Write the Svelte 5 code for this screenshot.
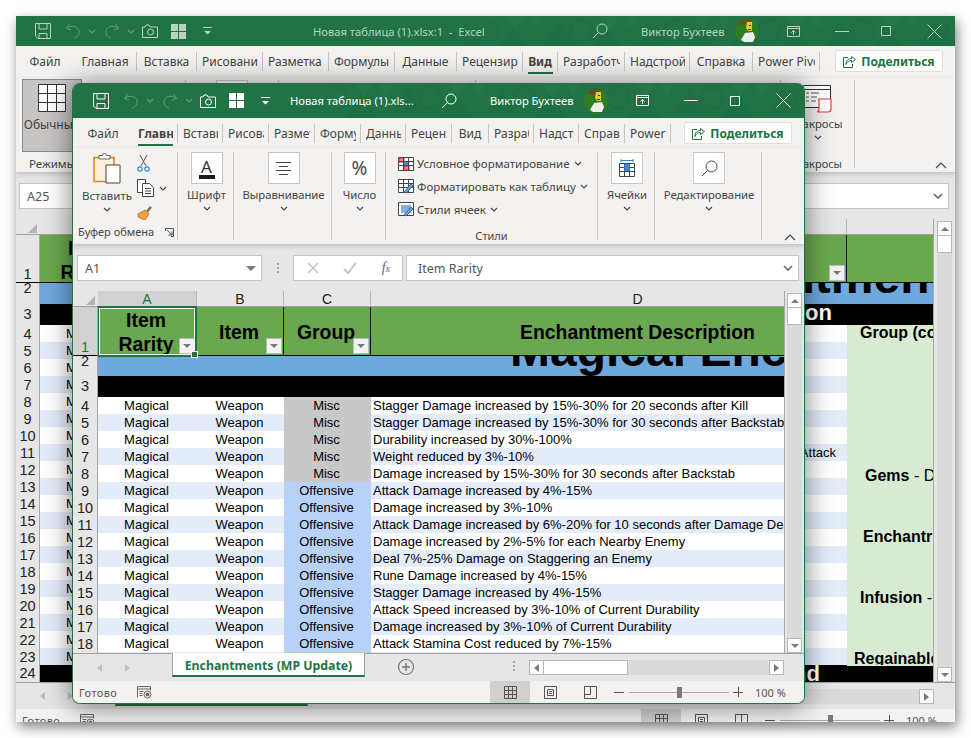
<script>
  const frontTabs = [
    { t: 'Файл', w: 60, c: true },
    { t: 'Главная', w: 45, active: true },
    { t: 'Вставка', w: 45 },
    { t: 'Рисование', w: 46 },
    { t: 'Разметка страницы', w: 46 },
    { t: 'Формулы', w: 46 },
    { t: 'Данные', w: 45 },
    { t: 'Рецензирование', w: 46 },
    { t: 'Вид', w: 37, c: true },
    { t: 'Разработчик', w: 45 },
    { t: 'Надстройки', w: 45 },
    { t: 'Справка', w: 46 },
    { t: 'Power Pivot', w: 46 }
  ];
  const backTabs = [
    { t: 'Файл', w: 58, c: true },
    { t: 'Главная', w: 63, c: true },
    { t: 'Вставка', w: 60, c: true },
    { t: 'Рисование', w: 66 },
    { t: 'Разметка страницы', w: 66 },
    { t: 'Формулы', w: 66, c: true },
    { t: 'Данные', w: 62, c: true },
    { t: 'Рецензирование', w: 66 },
    { t: 'Вид', w: 35, c: true, active: true },
    { t: 'Разработчик', w: 67 },
    { t: 'Надстройки', w: 65 },
    { t: 'Справка', w: 63, c: true },
    { t: 'Power Pivot', w: 67 }
  ];

  const data = [
    ['Misc', 'Stagger Damage increased by 15%-30% for 20 seconds after Kill'],
    ['Misc', 'Stagger Damage increased by 15%-30% for 30 seconds after Backstab'],
    ['Misc', 'Durability increased by 30%-100%'],
    ['Misc', 'Weight reduced by 3%-10%'],
    ['Misc', 'Damage increased by 15%-30% for 30 seconds after Backstab'],
    ['Offensive', 'Attack Damage increased by 4%-15%'],
    ['Offensive', 'Damage increased by 3%-10%'],
    ['Offensive', 'Attack Damage increased by 6%-20% for 10 seconds after Damage Dealt by Heavy Attack'],
    ['Offensive', 'Damage increased by 2%-5% for each Nearby Enemy'],
    ['Offensive', 'Deal 7%-25% Damage on Staggering an Enemy'],
    ['Offensive', 'Rune Damage increased by 4%-15%'],
    ['Offensive', 'Stagger Damage increased by 4%-15%'],
    ['Offensive', 'Attack Speed increased by 3%-10% of Current Durability'],
    ['Offensive', 'Damage increased by 3%-10% of Current Durability'],
    ['Offensive', 'Attack Stamina Cost reduced by 7%-15%'],
    ['', ''], ['', ''], ['', ''], ['', ''], ['', '']
  ];
  const rows = data.map((r, i) => ({ n: i + 4, group: r[0], desc: r[1], alt: i % 2 === 1 }));

  const notes = [
    { b: 'Group (co', rest: '', x: 14, gap: 0 },
    { b: 'Gems', rest: ' - D', x: 19, gap: 127 },
    { b: 'Enchantr', rest: '', x: 17, gap: 45 },
    { b: 'Infusion', rest: ' - ', x: 14, gap: 45 },
    { b: 'Regainable', rest: '', x: 8, gap: 45 }
  ];
</script>

{#snippet chevron()}
  <svg class="chev" viewBox="0 0 8 5" width="8" height="5"><path d="M1 1l3 3 3-3" fill="none" stroke="currentColor" stroke-width="1.1"/></svg>
{/snippet}

{#snippet titlebar(title, id)}
  <div class="titlebar">
    <svg class="pattern" width="520" height="35">
      <defs>
        <pattern {id} width="94" height="35" patternUnits="userSpaceOnUse">
          <path d="M14 30L30 4L46 30ZM62 35L78 8L94 35Z" fill="#1f6f44"/>
          <circle cx="52" cy="15" r="11" fill="none" stroke="#1f6f44" stroke-width="3"/>
          <path d="M0 0H14L7 12ZM70 0H90L80 14Z" fill="#257749"/>
        </pattern>
      </defs>
      <rect width="520" height="35" fill="url(#{id})"/>
    </svg>
    <div class="qat">
      <span class="slot s30"><svg width="16" height="16" viewBox="0 0 16 16" fill="none" stroke="currentColor"><path d="M.5.5h15v15H3L.5 13zM4 .5V6h8V.5M4 15.5v-5h8v5"/></svg></span>
      <span class="slot s23 dim"><svg width="16" height="16" viewBox="0 0 16 16" fill="none" stroke="currentColor"><path d="M4.5 1l-3 4.500 4.500 1.500M1.500 5.500C5 2.500 10 2.500 13 5.500c2.500 3.500.5 8-4 10"/></svg></span>
      <span class="slot s16 dim">{@render chevron()}</span>
      <span class="slot s23 dim"><svg width="16" height="16" viewBox="0 0 16 16" fill="none" stroke="currentColor"><path d="M11.500 1l3 4.500L10 7M14.500 5.500C11 2.500 6 2.500 3 5.500c-2.500 3.500-.5 8 4 10"/></svg></span>
      <span class="slot s15 dim">{@render chevron()}</span>
      <span class="slot s29"><svg width="16" height="14" viewBox="0 0 16 14" fill="none" stroke="currentColor"><path d="M.5 3H3l1-2h3l1 2h7.500v10.500H.5z"/><circle cx="8.500" cy="8" r="3"/></svg></span>
      <span class="slot s32"><svg width="15" height="15" viewBox="0 0 15 15" fill="currentColor"><path d="M0 0h7v7H0zM8 0h7v7H8zM0 8h7v7H0zM8 8h7v7H8z"/></svg></span>
      <span class="slot qd"><svg width="9" height="8" viewBox="0 0 9 8" fill="currentColor"><path d="M0 0h9v1H0zM1 4h7L4.500 7.500z"/></svg></span>
    </div>
    <div class="title">{title}</div>
    <div class="tright">
      <span class="slot s49"><svg width="16" height="16" viewBox="0 0 16 16" fill="none" stroke="currentColor"><circle cx="10" cy="6" r="5"/><path d="M6.500 9.500L1 15"/></svg></span>
      <span class="user">Виктор Бухтеев</span>
      <span class="slot s52">
        <svg class="avatar" width="24" height="24" viewBox="0 0 24 24">
          <circle cx="12" cy="12" r="12" fill="#2f7d23"/>
          <path d="M3 5A12 12 0 0 1 17 1L14 3 8 6z" fill="#6b4a24"/>
          <path d="M12 3h5v9h-4l-2-3z" fill="#e8c53a"/>
          <path d="M10 14l8-1 2 5-2 5H9l-3-2z" fill="#eee"/>
          <path d="M14 6h2v1h-2zM13 10h3v1h-3z" fill="#333"/>
        </svg>
      </span>
      <span class="slot s48"><svg width="13" height="11" viewBox="0 0 13 11" fill="none" stroke="currentColor"><path d="M.5.500h12v10H.5zM.5 2.500h12M6.500 9V4.500M4.500 6.500l2-2 2 2"/></svg></span>
      <span class="slot s46"><svg width="14" height="1" viewBox="0 0 14 1"><path d="M0 .5h14" stroke="currentColor"/></svg></span>
      <span class="slot s46"><svg width="10" height="10" viewBox="0 0 10 10" fill="none" stroke="currentColor"><path d="M.5.500h9v9h-9z"/></svg></span>
      <span class="slot s28"><svg width="15" height="15" viewBox="0 0 15 15" fill="none" stroke="currentColor"><path d="M.5.500l14 14M14.500.5l-14 14"/></svg></span>
    </div>
  </div>
{/snippet}

{#snippet tabstrip(list)}
  <div class="tabs">
    {#each list as tab}
      <div class="tab" class:center={tab.c} class:active={tab.active} class:nosep={tab.t === 'Файл'} style="width:{tab.w}px">
        <span>{tab.t}</span>
      </div>
    {/each}
    <div class="share">
      <svg width="13" height="13" viewBox="0 0 13 13" fill="none" stroke="#217346"><path d="M8.500 1.500l4 3-4 3v-2c-3 0-4.500 1.500-5.500 4 0-4 2-6 5.500-6zM5 2.500H.5v10h9V9"/></svg>
      Поделиться
    </div>
  </div>
{/snippet}

{#snippet formula(ref, value)}
  <div class="formula">
    <div class="namebox"><span>{ref}</span><i class="tri"></i></div>
    <div class="dots"><b></b><b></b><b></b></div>
    <div class="fxbtns">
      <svg width="12" height="12" viewBox="0 0 12 12" fill="none" stroke="#c4c4c4" stroke-width="1.500"><path d="M1 1l10 10M11 1L1 11"/></svg>
      <svg width="14" height="12" viewBox="0 0 14 12" fill="none" stroke="#c4c4c4" stroke-width="2"><path d="M1 7l4 4 8-10"/></svg>
      <span class="fx">f<sub>x</sub></span>
    </div>
    <div class="input"><span>{value}</span><svg class="inchev" width="10" height="6" viewBox="0 0 10 6" fill="none" stroke="#666" stroke-width="1.600"><path d="M1 1l4 4 4-4"/></svg></div>
  </div>
{/snippet}

{#snippet filter()}
  <span class="filter"><i class="tri small"></i></span>
{/snippet}

{#snippet sheet(front)}
  <div class="sheet">
    <div class="colheads">
      <div class="corner"><i></i></div>
      <div class="ch" class:on={front}>A</div>
      <div class="ch">B</div>
      <div class="ch">C</div>
      <div class="ch">D</div>
      <div class="ch"></div>
    </div>
    <div class="line head">
      <div class="rn bottom" class:on={front}>1</div>
      <div class="hc nudge"><span>Item<br />Rarity</span>{@render filter()}
        {#if front}<span class="sel"><i></i></span>{/if}
      </div>
      <div class="hc nudge"><span>Item</span>{@render filter()}</div>
      <div class="hc nudge"><span>Group</span>{@render filter()}</div>
      <div class="hc"><span>Enchantment Description</span>{@render filter()}</div>
      <div class="hc"></div>
    </div>
    <div class="line banner">
      <div class="rn up">2</div>
      <div class="bigtext">Magical Enchantment Information</div>
    </div>
    <div class="line blackrow">
      <div class="rn">3</div>
      <div class="blacktext">{front ? '' : 'Description'}</div>
    </div>
    <div class="rowsblock">
      {#each rows as r}
        <div class="line item" class:alt={r.alt}>
          <div class="rn">{r.n}</div>
          <div class="c mid">Magical</div>
          <div class="c mid">{r.group ? 'Weapon' : ''}</div>
          <div class="c mid" class:misc={r.group === 'Misc'} class:off={r.group === 'Offensive'} class:gr={!r.group}>{r.group}</div>
          <div class="c">{r.desc}</div>
          <div class="c e"></div>
        </div>
      {/each}
      <div class="notes">
        {#each notes as n}
          <div class="note" style="margin-top:{n.gap}px;padding-left:{n.x}px"><b>{n.b}</b>{n.rest}</div>
        {/each}
      </div>
    </div>
    <div class="line blackrow last">
      <div class="rn">24</div>
      <div class="blacktext endtext">Legend</div>
    </div>
  </div>
{/snippet}

{#snippet vscroll()}
  <div class="vscroll">
    <div class="vtrack">
      <span class="sbtn"><i class="tri up"></i></span>
      <span class="vthumb"></span>
      <span class="fill"></span>
      <span class="sbtn"><i class="tri small"></i></span>
    </div>
  </div>
{/snippet}

{#snippet bottombar()}
  <div class="tabbar">
    <span class="nav"><i class="tl"></i><i class="tr dimtr"></i></span>
    <div class="sheettab">Enchantments (MP Update)</div>
    <svg class="plus" width="18" height="18" viewBox="0 0 18 18" fill="none" stroke="#7a7a7a"><circle cx="9" cy="9" r="7.500" stroke-width="1.200"/><path d="M9 5v8M5 9h8" stroke-width="1.500"/></svg>
    <div class="dots tabdots"><b></b><b></b><b></b></div>
    <div class="hscroll">
      <span class="sbtn"><i class="tl dark"></i></span>
      <span class="hthumb"></span>
      <span class="fill"></span>
      <span class="sbtn"><i class="tr"></i></span>
    </div>
  </div>
  <div class="status">
    <span class="ready">Готово</span>
    <svg class="macro" width="15" height="13" viewBox="0 0 15 13" fill="none" stroke="#666"><path d="M.5 11.500V.5h13v4M.5 3h13M2.500 5.500h4M2.500 7.500h3M2.500 9.500h3"/><circle cx="10.500" cy="8.500" r="3.500"/><circle cx="10.500" cy="8.500" r="1.500" fill="#666"/></svg>
    <div class="views">
      <span class="vbtn on"><svg width="13" height="13" viewBox="0 0 13 13" fill="none" stroke="#555"><path d="M.5.500h12v12H.5zM4.500.5v12M8.500.5v12M.5 4.500h12M.5 8.500h12"/></svg></span>
      <span class="vbtn"><svg width="13" height="13" viewBox="0 0 13 13" fill="none" stroke="#555"><path d="M.5.500h12v12H.5zM3.500 3.500h6v6h-6zM5 5.500h3M5 7.500h3"/></svg></span>
      <span class="vbtn"><svg width="13" height="13" viewBox="0 0 13 13" fill="none" stroke="#555"><path d="M.5.500h12v12H.5zM.5 8.500h6V.5"/></svg></span>
    </div>
    <div class="zoombar">
      <span class="zm"></span>
      <span class="slider"><i></i></span>
      <span class="zp"></span>
      <span class="pct">100 %</span>
    </div>
  </div>
{/snippet}

{#snippet collapse()}
  <svg class="collapse" width="12" height="7" viewBox="0 0 12 7" fill="none" stroke="#444" stroke-width="1.100"><path d="M1 6l5-5 5 5"/></svg>
{/snippet}

<div class="desktop">
  <div class="win back">
    {@render titlebar('Новая таблица (1).xlsx:1  -  Excel', 'hexback')}
    {@render tabstrip(backTabs)}
    <div class="ribbon">
      <div class="grp viewgrp">
        <div class="normal">
          <svg width="28" height="28" viewBox="0 0 28 28" fill="#fff" stroke="#333"><path d="M.5.500h27v27H.5zM9.500.5v27M18.500.5v27M.5 9.500h27M.5 18.500h27"/></svg>
          <span>Обычный</span>
        </div>
        <div class="viewlabel">Режимы просмотра</div>
      </div>
      <div class="grp w93"><div class="box"></div></div>
      <div class="grp w197"></div>
      <div class="grp w305"></div>
      <div class="grp macros">
        <svg width="30" height="28" viewBox="0 0 30 28" fill="none">
          <path d="M.5.500h27v22H.5zM.5 4.500h27" stroke="#333" fill="#fff"/>
          <path d="M3 8h3M8 8h8M3 12h3M8 12h6M3 16h3M8 16h5" stroke="#555"/>
          <path d="M15 14h13v10c0 2-1 3-3 3H14c2 0 2-2 2-3V15c0-1-1-1-1-1z" stroke="#e8403a" fill="#fff" stroke-width="1.200"/>
        </svg>
        <div class="blabel">Макросы</div>
        {@render chevron()}
        <div class="glabel">Макросы</div>
      </div>
      {@render collapse()}
    </div>
    {@render formula('A25', '')}
    <div class="area">
      {@render sheet(false)}
      {@render vscroll()}
    </div>
    {@render bottombar()}
  </div>

  <div class="win front">
    {@render titlebar('Новая таблица (1).xls...', 'hexfront')}
    {@render tabstrip(frontTabs)}
    <div class="ribbon">
      <div class="grp clip">
        <div class="cliptop">
          <div class="paste">
            <svg width="28" height="32" viewBox="0 0 28 32" fill="none">
              <path d="M1 5.500h20v24H1z" fill="#fbeedd" stroke="#d98324" stroke-width="1.500"/>
              <path d="M6 6V3.500h3.500a2 2 0 0 1 4 0H17V7H6z" fill="#fff" stroke="#666"/>
              <path d="M13 13h14v18H13z" fill="#fff" stroke="#444"/>
            </svg>
            <span>Вставить</span>
            {@render chevron()}
          </div>
          <div class="tools">
            <svg width="13" height="17" viewBox="0 0 13 17" fill="none"><path d="M3 0l6 11M10 0L4 11" stroke="#555"/><circle cx="3" cy="14" r="2.200" stroke="#2b88d8" stroke-width="1.200"/><circle cx="10" cy="14" r="2.200" stroke="#2b88d8" stroke-width="1.200"/></svg>
            <span class="toolrow">
              <svg width="17" height="18" viewBox="0 0 17 18" fill="#fff" stroke="#444"><path d="M.5.500h8v13h-8z"/><path d="M5.500 4.500h7l4 4v9h-11z"/><path d="M8 9.500h6M8 12h6M8 14.500h6"/></svg>
              {@render chevron()}
            </span>
            <svg width="16" height="16" viewBox="0 0 16 16"><path d="M9 7l4-5 2 1.500-4 5z" fill="#777"/><path d="M1 10l7-4 4 4-4 6-7-3z" fill="#f0a04a" stroke="#d9761a"/></svg>
          </div>
        </div>
        <div class="cliplabel">Буфер обмена
          <svg width="9" height="9" viewBox="0 0 9 9" fill="none" stroke="#555"><path d="M.5 3V.5h8v8H6M2 2l5 5M3.500 7H7V3.500"/></svg>
        </div>
      </div>
      <div class="grp big w56">
        <div class="box"><span class="aglyph">A</span><i class="abar"></i></div>
        <div class="blabel">Шрифт</div>
        {@render chevron()}
      </div>
      <div class="grp big w98">
        <div class="box"><svg width="15" height="13" viewBox="0 0 15 13" stroke="#444"><path d="M0 .5h15M3 4.500h9M0 8.500h15M3 12.500h9"/></svg></div>
        <div class="blabel">Выравнивание</div>
        {@render chevron()}
      </div>
      <div class="grp big w54">
        <div class="box"><span class="pglyph">%</span></div>
        <div class="blabel">Число</div>
        {@render chevron()}
      </div>
      <div class="grp styles">
        <div class="srow">
          <svg width="16" height="14" viewBox="0 0 16 14" fill="#fff" stroke="#444"><path d="M.5.500h15v13H.5z"/><path d="M1 1h5v4H1zM6 9h5v4H6z" fill="#f28a8a" stroke="#e23"/><path d="M6 5h5v4H6z" fill="#3a8fdc" stroke="none"/><path d="M.5 4.500h15M.5 8.500h15M5.500.5v13M10.500.5v13" fill="none"/></svg>
          <span>Условное форматирование</span>{@render chevron()}
        </div>
        <div class="srow">
          <svg width="16" height="15" viewBox="0 0 16 15" fill="#fff" stroke="#444"><path d="M.5.500h15v13H.5z"/><path d="M.5 4.500h15M.5 8.500h15M5.500.5v13M10.500.5v13" fill="none"/><path d="M6 13l7-8 2 2-7 7z" fill="#6fa8dc" stroke="#35618f"/></svg>
          <span>Форматировать как таблицу</span>{@render chevron()}
        </div>
        <div class="srow">
          <svg width="16" height="15" viewBox="0 0 16 15" fill="#fff" stroke="#444"><path d="M.5.500h15v13H.5z"/><path d="M3 3h10v8H3z" fill="#7fb2e5" stroke="none"/><path d="M6 13l7-8 2 2-7 7z" fill="#6fa8dc" stroke="#35618f"/></svg>
          <span>Стили ячеек</span>{@render chevron()}
        </div>
        <div class="glabel">Стили</div>
      </div>
      <div class="grp big w57">
        <div class="box"><svg width="16" height="18" viewBox="0 0 16 18" fill="none"><path d="M.5 4.500h15v13H.5zM5.500 4.500v13M10.500 4.500v13M.5 8.500h15M.5 12.500h15" stroke="#444"/><path d="M5.500 5h5v7h-5z" fill="#3a8fdc"/><path d="M2 1.500h12M2 0v3M14 0v3" stroke="#2b88d8"/></svg></div>
        <div class="blabel">Ячейки</div>
        {@render chevron()}
      </div>
      <div class="grp big w107">
        <div class="box"><svg width="17" height="17" viewBox="0 0 17 17" fill="none" stroke="#444"><circle cx="10.500" cy="6.500" r="5.500"/><path d="M6.500 10.500L1 16"/></svg></div>
        <div class="blabel">Редактирование</div>
        {@render chevron()}
      </div>
      {@render collapse()}
    </div>
    {@render formula('A1', 'Item Rarity')}
    <div class="area">
      {@render sheet(true)}
      {@render vscroll()}
    </div>
    {@render bottombar()}
  </div>
</div>

<style>
  :global(body) {
    margin: 0;
    background: #fff;
  }

  .desktop {
    position: relative;
    width: 971px;
    height: 738px;
    overflow: hidden;
    background: #fff;
    font-family: "Noto Sans", sans-serif;
  }

  i {
    display: block;
    font-style: normal;
  }

  /* windows */
  .win {
    position: absolute;
    display: flex;
    flex-direction: column;
    overflow: hidden;
    box-sizing: border-box;
    background: #f3f2f1;
  }
  .back {
    z-index: 1;
    left: 16px;
    top: 16px;
    width: 939px;
    height: 706px;
    box-shadow: 2px 5px 12px rgba(0, 0, 0, 0.5);
    --tb: 30px;
    --tabs: 32px;
    --rib: 94px;
    --ribtop: 2px;
    --r1: 48px;
    --r2: 21px;
    --rh: 24px;
    --tabbar: 27px;
    --vw: 22px;
    --vpad: 3px;
    --hend: 21px;
    --fg: #b4d3c1;
    --tdim: 0.42;
  }
  .front {
    z-index: 2;
    left: 72px;
    top: 83px;
    width: 733px;
    height: 621px;
    border: 1px solid #217346;
    border-top: 0;
    border-radius: 8px;
    box-shadow: 0 2px 28px rgba(0, 0, 0, 0.5);
    --tb: 35px;
    --tabs: 30px;
    --rib: 96px;
    --ribtop: 4px;
    --r1: 49px;
    --r2: 20px;
    --rh: 25px;
    --tabbar: 28px;
    --vw: 20px;
    --vpad: 2px;
    --hend: 20px;
    --fg: #fff;
    --tdim: 0.3;
  }

  /* title bar */
  .titlebar {
    position: relative;
    flex: none;
    height: var(--tb);
    overflow: hidden;
    background: #217346;
    color: var(--fg);
    display: flex;
    align-items: center;
    font-size: 11.2px;
  }
  .pattern {
    position: absolute;
    right: 0;
    top: 0;
    -webkit-mask-image: linear-gradient(90deg, transparent, #000 60px);
    mask-image: linear-gradient(90deg, transparent, #000 60px);
  }
  .qat {
    position: relative;
    display: flex;
    align-items: center;
    flex: none;
    padding-left: 19px;
  }
  .front .qat {
    padding-left: 20px;
  }
  .slot {
    display: flex;
    align-items: center;
    flex: none;
    height: 18px;
  }
  .s15 { width: 15px; }
  .s16 { width: 16px; }
  .s23 { width: 23px; }
  .s28 { width: 28px; }
  .s29 { width: 29px; }
  .s30 { width: 30px; }
  .s32 { width: 32px; }
  .s46 { width: 46px; }
  .s48 { width: 48px; }
  .s49 { width: 49px; }
  .s52 { width: 52px; }
  .qd { width: 9px; }
  .dim {
    opacity: var(--tdim);
  }
  .title {
    position: relative;
    flex: 1;
    white-space: pre;
    padding-left: 20px;
  }
  .back .title {
    padding-left: 101px;
  }
  .tright {
    position: relative;
    display: flex;
    align-items: center;
    flex: none;
  }
  .user {
    width: 94px;
    white-space: nowrap;
  }
  .avatar {
    display: block;
  }

  /* tabs */
  .tabs {
    flex: none;
    position: relative;
    display: flex;
    height: var(--tabs);
    padding-top: 6px;
    box-sizing: border-box;
    font-size: 12px;
    color: #444;
  }
  .tab {
    position: relative;
    flex: none;
    height: 19px;
    line-height: 19px;
    padding: 0 4px 0 5px;
    box-sizing: border-box;
    border-right: 1px solid #c8c6c4;
  }
  .tab.nosep {
    border-right: 0;
  }
  .tab span {
    display: block;
    overflow: hidden;
    white-space: nowrap;
  }
  .tab.center {
    text-align: center;
    padding: 0;
  }
  .tab.active {
    font-weight: 700;
  }
  .tab.active::after {
    content: '';
    position: absolute;
    left: 5px;
    right: 4px;
    bottom: -3px;
    height: 2px;
    background: #217346;
  }
  .share {
    display: flex;
    align-items: center;
    justify-content: center;
    gap: 5px;
    margin-left: auto;
    margin-right: 12px;
    margin-top: -2px;
    width: 108px;
    height: 22px;
    box-sizing: border-box;
    background: #fff;
    border: 1px solid #e1dfdd;
    border-radius: 2px;
    color: #217346;
    font-weight: 700;
    font-size: 12px;
  }

  /* ribbon */
  .ribbon {
    position: relative;
    z-index: 2;
    flex: none;
    display: flex;
    height: var(--rib);
    padding-top: var(--ribtop);
    box-sizing: border-box;
    font-size: 11.5px;
    color: #444;
    box-shadow: 0 2px 5px rgba(0, 0, 0, 0.18);
  }
  .grp {
    position: relative;
    flex: none;
    height: 88px;
    box-sizing: border-box;
    border-right: 1px solid #c8c6c4;
    display: flex;
    flex-direction: column;
    align-items: center;
  }
  .big {
    padding-left: 2px;
  }
  .box {
    width: 32px;
    height: 32px;
    flex: none;
    box-sizing: border-box;
    background: #fff;
    border: 1px solid #c8c6c4;
    display: flex;
    flex-direction: column;
    align-items: center;
    justify-content: center;
  }
  .blabel {
    margin-top: 3px;
    line-height: 16px;
    white-space: nowrap;
    font-size: 11.3px;
  }
  .big .chev,
  .macros .chev,
  .paste .chev {
    margin-top: 3px;
    display: block;
    flex: none;
  }
  .w56 { width: 56px; }
  .w54 { width: 54px; }
  .w57 { width: 57px; }
  .w98 { width: 98px; }
  .w107 { width: 107px; }
  .w93 { width: 93px; }
  .w197 { width: 197px; }
  .w305 { width: 305px; }
  .aglyph {
    font-size: 17px;
    line-height: 17px;
    color: #333;
  }
  .abar {
    width: 16px;
    height: 4px;
    background: #1a1a1a;
  }
  .pglyph {
    font-size: 19px;
    color: #444;
  }
  .clip {
    width: 105px;
    align-items: stretch;
  }
  .cliptop {
    display: flex;
    height: 76px;
    padding-left: 11px;
  }
  .paste {
    width: 46px;
    display: flex;
    flex-direction: column;
    align-items: center;
  }
  .paste span {
    line-height: 16px;
    margin-top: 4px;
    white-space: nowrap;
  }
  .tools {
    display: flex;
    flex-direction: column;
    align-items: flex-start;
    gap: 7px;
    padding: 3px 0 0 7px;
  }
  .toolrow {
    display: flex;
    align-items: center;
    gap: 5px;
  }
  .cliplabel {
    display: flex;
    justify-content: space-between;
    align-items: center;
    padding: 0 3px 0 5px;
    line-height: 16px;
    white-space: nowrap;
    font-size: 11px;
  }
  .styles {
    width: 212px;
    align-items: flex-start;
    padding-left: 12px;
  }
  .srow {
    display: flex;
    align-items: center;
    gap: 3px;
    height: 23px;
    white-space: nowrap;
  }
  .srow .chev {
    margin-left: 1px;
  }
  .glabel {
    position: absolute;
    left: 0;
    right: 0;
    bottom: -4px;
    line-height: 16px;
    text-align: center;
    font-size: 11px;
  }
  .collapse {
    position: absolute;
    right: 8px;
    bottom: 3px;
  }
  .viewgrp {
    width: 170px;
    align-items: flex-start;
    padding: 0 0 0 6px;
  }
  .normal {
    flex: none;
    width: 60px;
    height: 73px;
    margin-top: -1px;
    box-sizing: border-box;
    background: #c8c6c4;
    border: 1px solid #8a8a8a;
    display: flex;
    flex-direction: column;
    align-items: center;
    padding-top: 4px;
  }
  .normal span {
    margin-top: 4px;
    font-size: 12px;
  }
  .viewlabel {
    margin: 4px 0 0 7px;
    line-height: 16px;
    white-space: nowrap;
  }
  .macros {
    width: 74px;
    padding-top: 5px;
  }

  /* formula bar */
  .formula {
    flex: none;
    display: flex;
    height: 47px;
    box-sizing: border-box;
    padding: 11px 5px 10px 4px;
    background: #e6e6e6;
    font-size: 12.5px;
    color: #555;
  }
  .back .formula {
    padding-left: 3px;
    padding-right: 6px;
  }
  .namebox,
  .fxbtns,
  .input {
    display: flex;
    align-items: center;
    box-sizing: border-box;
    background: #fff;
    border: 1px solid #c6c6c6;
    height: 26px;
  }
  .namebox {
    width: 185px;
    flex: none;
    padding: 0 5px 0 7px;
    justify-content: space-between;
  }
  .tri {
    width: 0;
    height: 0;
    border-left: 5px solid transparent;
    border-right: 5px solid transparent;
    border-top: 5px solid #7a7a7a;
  }
  .tri.small {
    border-left-width: 4px;
    border-right-width: 4px;
    border-top-width: 4px;
  }
  .tri.up {
    border-top: 0;
    border-left-width: 4px;
    border-right-width: 4px;
    border-bottom: 4px solid #7a7a7a;
  }
  .dots {
    flex: none;
    width: 31px;
    display: flex;
    flex-direction: column;
    align-items: center;
    justify-content: center;
    gap: 2px;
  }
  .dots b {
    display: block;
    width: 2px;
    height: 2px;
    background: #a8a8a8;
  }
  .fxbtns {
    flex: none;
    width: 110px;
    justify-content: space-between;
    padding: 0 12px 0 13px;
    margin-right: 3px;
  }
  .fx {
    font-family: "Liberation Serif", serif;
    font-style: italic;
    font-size: 14px;
    color: #666;
  }
  .fx sub {
    font-size: 10px;
    vertical-align: baseline;
  }
  .input {
    flex: 1;
    padding: 0 5px 0 11px;
    justify-content: space-between;
  }

  /* sheet */
  .area {
    flex: 1;
    display: flex;
    min-height: 0;
    background: #e6e6e6;
  }
  .back .area {
    flex: none;
    height: 463px;
  }
  .sheet {
    flex: 1;
    min-width: 0;
    overflow: hidden;
    font-family: "Liberation Sans", sans-serif;
    color: #000;
    --cols: var(--rh) 99px 87px 87px 534px 87px;
  }
  .colheads,
  .line {
    display: grid;
    grid-template-columns: var(--cols);
    width: 918px;
  }
  .colheads {
    height: 16px;
    background: #e6e6e6;
    font-size: 14px;
    line-height: 16px;
    text-align: center;
    border-bottom: 1px solid #a0a0a0;
    box-sizing: border-box;
    color: #222;
  }
  .corner {
    position: relative;
  }
  .corner i {
    position: absolute;
    right: 3px;
    bottom: 2px;
    width: 0;
    height: 0;
    border-left: 9px solid transparent;
    border-bottom: 9px solid #b4b4b4;
  }
  .ch {
    border-right: 1px solid #b8b8b8;
  }
  .ch.on {
    background: #d2d2d2;
    color: #217346;
  }
  .rn {
    background: #e6e6e6;
    border-right: 1px solid #a8a8a8;
    box-sizing: border-box;
    font-size: 14.5px;
    text-align: center;
    display: flex;
    align-items: center;
    justify-content: center;
    color: #222;
    z-index: 1;
  }
  .rn.bottom {
    align-items: flex-end;
  }
  .rn.on {
    background: #d2d2d2;
    color: #217346;
  }
  .rn.up {
    align-items: flex-start;
    line-height: 10px;
  }
  .blackrow .rn {
    padding-bottom: 1px;
  }
  .line.head {
    height: var(--r1);
    grid-auto-rows: calc(var(--r1) - 1px);
    background: #6aa84f;
    border-bottom: 1px solid #000;
    box-sizing: border-box;
  }
  .hc {
    position: relative;
    display: flex;
    align-items: center;
    justify-content: center;
    text-align: center;
    font-weight: 700;
    font-size: 19.4px;
    line-height: 24px;
    border-right: 1px solid #111;
    padding-top: 2px;
    box-sizing: border-box;
  }
  .hc.nudge {
    padding-right: 2px;
  }
  .hc:last-child {
    border-right: 0;
  }
  .filter {
    position: absolute;
    right: 1px;
    bottom: 1px;
    width: 16px;
    height: 16px;
    box-sizing: border-box;
    background: #f2f2f2;
    border: 1px solid #bbb;
    display: flex;
    align-items: center;
    justify-content: center;
  }
  .sel {
    position: absolute;
    left: -1px;
    top: -1px;
    right: -1px;
    bottom: -2px;
    border: 2px solid #217346;
    outline: 1px solid #fff;
    outline-offset: -3px;
    pointer-events: none;
  }
  .sel i {
    position: absolute;
    right: -3px;
    bottom: -3px;
    width: 5px;
    height: 5px;
    background: #217346;
    border: 1px solid #fff;
  }
  .line.banner {
    height: var(--r2);
    grid-auto-rows: var(--r2);
    background: #6fa8dc;
    overflow: hidden;
    grid-template-columns: var(--rh) 1fr;
  }
  .bigtext {
    align-self: start;
    padding-left: 412px;
    font-weight: 700;
    font-size: 48px;
    line-height: 48px;
    white-space: nowrap;
    margin-top: -30px;
  }
  .line.blackrow {
    height: 21px;
    background: #000;
    grid-template-columns: var(--rh) 1fr;
  }
  .line.last {
    height: 17px;
  }
  .blacktext {
    color: #fff;
    font-weight: 700;
    font-size: 22px;
    line-height: 17px;
    text-align: right;
    padding-right: 102px;
    white-space: nowrap;
  }
  .endtext {
    padding-right: 114px;
    line-height: 17px;
  }
  .rowsblock {
    position: relative;
  }
  .line.item {
    height: 17px;
    background: #fff;
    font-size: 13px;
    line-height: 18px;
  }
  .line.item.alt {
    background: #e4ecfa;
  }
  .c {
    padding-left: 2px;
    white-space: nowrap;
    overflow: hidden;
  }
  .c.mid {
    text-align: center;
    padding-left: 0;
    padding-right: 2px;
  }
  .c.misc {
    background: #c8c8c8;
  }
  .c.off {
    background: #b8d2f7;
  }
  .c.gr {
    background: #b6d7a8;
  }
  .c.e {
    background: #d9ead3;
  }
  .notes {
    position: absolute;
    left: 830px;
    top: 0;
    width: 87px;
    overflow: hidden;
    font-size: 16px;
    line-height: 16px;
    white-space: nowrap;
    height: 340px;
  }

  /* scrollbars */
  .vscroll {
    flex: none;
    width: var(--vw);
    box-sizing: border-box;
    border-left: 1px solid #a8a8a8;
    padding: 2px 0 0 var(--vpad);
    display: flex;
  }
  .vtrack {
    flex: none;
    width: 15px;
    display: flex;
    flex-direction: column;
    background: #dadada;
  }
  .sbtn {
    flex: none;
    width: 15px;
    height: 15px;
    box-sizing: border-box;
    background: #fafafa;
    border: 1px solid #b8b8b8;
    display: flex;
    align-items: center;
    justify-content: center;
  }
  .vthumb {
    flex: none;
    height: 17px;
    box-sizing: border-box;
    background: #fff;
    border: 1px solid #b8b8b8;
    border-top: 0;
  }
  .fill {
    flex: 1;
  }
  .tabbar {
    flex: none;
    display: flex;
    align-items: stretch;
    height: var(--tabbar);
    box-sizing: border-box;
    background: #e6e6e6;
    border-top: 1px solid #a0a0a0;
  }
  .nav {
    flex: none;
    width: 99px;
    display: flex;
    align-items: center;
    gap: 23px;
    padding-left: 24px;
    box-sizing: border-box;
  }
  .tl,
  .tr {
    width: 0;
    height: 0;
    border-top: 4px solid transparent;
    border-bottom: 4px solid transparent;
  }
  .tl {
    border-right: 5px solid #c0c0c0;
  }
  .tr {
    border-left: 5px solid #7a7a7a;
  }
  .tr.dimtr {
    border-left-color: #c0c0c0;
  }
  .tl.dark {
    border-right-color: #7a7a7a;
  }
  .sheettab {
    flex: none;
    width: 193px;
    height: 24px;
    margin-top: -1px;
    box-sizing: border-box;
    background: #fff;
    border: 1px solid #a0a0a0;
    border-top: 0;
    border-bottom: 2px solid #217346;
    color: #217346;
    font-weight: 700;
    font-size: 12.3px;
    line-height: 26px;
    text-align: center;
    white-space: nowrap;
  }
  .plus {
    flex: none;
    margin: 4px 0 0 32px;
  }
  .tabdots {
    width: 14px;
    margin-left: 92px;
    height: 23px;
  }
  .hscroll {
    flex: 1;
    display: flex;
    height: 15px;
    margin: 6px var(--hend) 0 8px;
    background: #dadada;
  }
  .hthumb {
    flex: none;
    width: 84px;
    box-sizing: border-box;
    background: #fff;
    border: 1px solid #b8b8b8;
    border-left: 0;
  }

  /* status bar */
  .status {
    flex: none;
    display: flex;
    align-items: center;
    height: 22px;
    box-sizing: border-box;
    background: #f3f2f1;
    font-size: 11px;
    color: #555;
  }
  .ready {
    margin-left: 6px;
    padding-top: 1px;
    letter-spacing: 0.4px;
  }
  .macro {
    margin-left: 20px;
  }
  .views {
    display: flex;
    margin-left: auto;
    height: 100%;
  }
  .vbtn {
    width: 40px;
    display: flex;
    align-items: center;
    justify-content: center;
  }
  .vbtn.on {
    background: #d2d0ce;
  }
  .zoombar {
    display: flex;
    align-items: center;
    width: 194px;
    padding-left: 4px;
    box-sizing: border-box;
  }
  .zm,
  .zp {
    position: relative;
    width: 10px;
    height: 1px;
    background: #555;
    flex: none;
  }
  .zp::after {
    content: '';
    position: absolute;
    left: 4.5px;
    top: -4.5px;
    width: 1px;
    height: 10px;
    background: #555;
  }
  .slider {
    position: relative;
    flex: none;
    width: 100px;
    height: 1px;
    background: #a8a8a8;
    margin: 0 4px 0 5px;
  }
  .slider i {
    position: absolute;
    left: 48px;
    top: -5px;
    width: 5px;
    height: 11px;
    background: #7a7a7a;
  }
  .pct {
    margin-left: 12px;
    white-space: nowrap;
  }
</style>
